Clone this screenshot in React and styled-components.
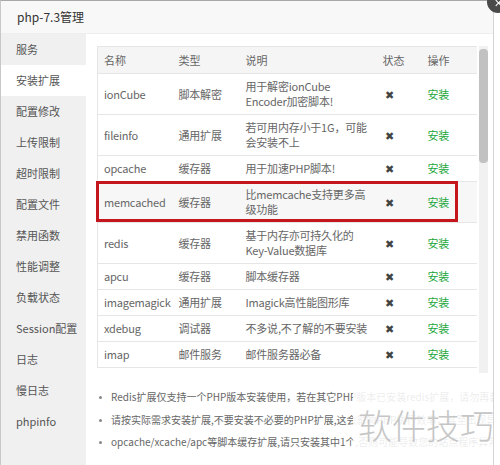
import React from "react";
import styled, { createGlobalStyle } from "styled-components";

const GlobalStyle = createGlobalStyle`
  html, body {
    margin: 0;
    padding: 0;
    background: #fff;
    overflow: hidden;
  }
  body {
    font-family: "Noto Sans CJK SC", "Noto Sans", sans-serif;
    font-size: 11px;
    color: #666;
  }
`;

const Modal = styled.div`
  position: relative;
  width: 492px;
  height: 464px;
  border-top: 1px solid #a8a8a8;
  border-right: 1px solid #d4d4d4;
  border-left: 1px solid #c8c8c8;
  background: #fff;
  display: flex;
  flex-direction: column;
  overflow: hidden;
`;

const TitleBar = styled.div`
  height: 32px;
  line-height: 32px;
  padding-left: 16px;
  background: #f8f8f8;
  border-bottom: 1px solid #eee;
  font-size: 12px;
  color: #333;
`;

const CloseBtn = styled.div`
  position: fixed;
  top: -9px;
  left: 487px;
  width: 22px;
  height: 22px;
  border-radius: 50%;
  background: #4a4a4a;
  color: #fff;
  font-size: 11px;
  display: flex;
  align-items: center;
  justify-content: center;
  z-index: 3;
`;

const Body = styled.div`
  flex: 1;
  display: flex;
  min-height: 0;
`;

const Sidebar = styled.div`
  width: 85px;
  background: #f0f0f0;
  display: flex;
  flex-direction: column;
`;

const NavItem = styled.div`
  height: 31px;
  line-height: 31px;
  padding-left: 15px;
  font-size: 11px;
  color: #555;
  white-space: nowrap;
  background: ${({ active }) => (active ? "#fff" : "transparent")};
`;

const Content = styled.div`
  flex: 1;
  padding: 12px 0 0 11px;
  display: flex;
  flex-direction: column;
  min-width: 0;
`;

const TableWrap = styled.div`
  position: relative;
  display: flex;
  height: 327px;
  flex-shrink: 0;
`;

const TableBox = styled.div`
  width: 380px;
  overflow: hidden;
`;

const Table = styled.table`
  width: 380px;
  border-collapse: collapse;
  table-layout: fixed;
  border: 1px solid #e6e6e6;
`;

const Th = styled.th`
  height: 26px;
  padding: 0 6px;
  background: #f5f5f5;
  font-weight: normal;
  text-align: left;
  color: #666;
  border-bottom: 1px solid #e6e6e6;
`;

const Tr = styled.tr`
  background: ${({ hl }) => (hl ? "#f7f7f7" : "#fff")};
`;

const Td = styled.td`
  padding: 5px 6px;
  line-height: 15px;
  color: #666;
  letter-spacing: -0.2px;
  border-bottom: 1px solid #e6e6e6;
  vertical-align: middle;
  overflow-wrap: anywhere;
  white-space: ${({ nowrap }) => (nowrap ? "nowrap" : "normal")};
`;

const Cross = styled.span`
  color: #444;
  font-size: 11px;
  padding-left: 2px;
`;

const InstallLink = styled.span`
  color: #20a53a;
`;

const Scrollbar = styled.div`
  width: 9px;
  margin-left: 2px;
  background: #f1f1f1;
  display: flex;
  flex-direction: column;
  padding-top: 3px;
`;

const Thumb = styled.div`
  height: 114px;
  background: #c1c1c1;
  border-radius: 4px;
`;

const Highlight = styled.div`
  position: absolute;
  left: -1px;
  top: 135px;
  width: 356px;
  height: 35px;
  border: 3px solid #c4161c;
  pointer-events: none;
`;

const Notes = styled.ul`
  margin: 13px 0 0;
  padding: 0 0 0 14px;
  list-style: none;
`;

const Note = styled.li`
  position: relative;
  height: 22.5px;
  line-height: 22.5px;
  font-size: 10px;
  color: #666;
  white-space: nowrap;
  &::before {
    content: "";
    position: absolute;
    left: -12px;
    top: 10px;
    width: 3px;
    height: 3px;
    border-radius: 50%;
    background: #888;
  }
`;

const Watermark = styled.div`
  position: absolute;
  left: 352px;
  top: 387px;
  width: 148px;
  height: 77px;
  background: rgba(255, 255, 255, 0.88);
  font-family: "Noto Sans CJK SC", sans-serif;
  font-weight: 300;
  font-size: 34px;
  line-height: 40px;
  color: #c6c6c6;
  white-space: nowrap;
  padding: 17px 0 0 5px;
  box-sizing: border-box;
  z-index: 2;
`;

const navItems = [
  "服务",
  "安装扩展",
  "配置修改",
  "上传限制",
  "超时限制",
  "配置文件",
  "禁用函数",
  "性能调整",
  "负载状态",
  "Session配置",
  "日志",
  "慢日志",
  "phpinfo",
];

const rows = [
  ["ionCube", "脚本解密", "用于解密ionCube Encoder加密脚本!"],
  ["fileinfo", "通用扩展", "若可用内存小于1G，可能会安装不上"],
  ["opcache", "缓存器", "用于加速PHP脚本!"],
  ["memcached", "缓存器", "比memcache支持更多高级功能"],
  ["redis", "缓存器", "基于内存亦可持久化的Key-Value数据库"],
  ["apcu", "缓存器", "脚本缓存器"],
  ["imagemagick", "通用扩展", "Imagick高性能图形库"],
  ["xdebug", "调试器", "不多说,不了解的不要安装"],
  ["imap", "邮件服务", "邮件服务器必备"],
];

const notes = [
  "Redis扩展仅支持一个PHP版本安装使用，若在其它PHP版本已安装redis扩展，请勿再装",
  "请按实际需求安装扩展,不要安装不必要的PHP扩展,这会影响PHP执行效率，甚至出现异常",
  "opcache/xcache/apc等脚本缓存扩展,请只安装其中1个,否则可能导致您的站点程序异常",
];

export default function App() {
  return (
    <>
      <GlobalStyle />
      <Modal>
        <TitleBar>php-7.3管理</TitleBar>
        <Body>
          <Sidebar>
            {navItems.map((item) => (
              <NavItem key={item} active={item === "安装扩展"}>
                {item}
              </NavItem>
            ))}
          </Sidebar>
          <Content>
            <TableWrap>
              <TableBox>
                <Table>
                  <colgroup>
                    <col style={{ width: 75 }} />
                    <col style={{ width: 67 }} />
                    <col style={{ width: 137 }} />
                    <col style={{ width: 45 }} />
                    <col style={{ width: 56 }} />
                  </colgroup>
                  <thead>
                    <tr>
                      <Th>名称</Th>
                      <Th>类型</Th>
                      <Th>说明</Th>
                      <Th>状态</Th>
                      <Th>操作</Th>
                    </tr>
                  </thead>
                  <tbody>
                    {rows.map(([name, type, desc]) => (
                      <Tr key={name} hl={name === "memcached"}>
                        <Td nowrap>{name}</Td>
                        <Td nowrap>{type}</Td>
                        <Td>{desc}</Td>
                        <Td>
                          <Cross>✖</Cross>
                        </Td>
                        <Td>
                          <InstallLink>安装</InstallLink>
                        </Td>
                      </Tr>
                    ))}
                  </tbody>
                </Table>
              </TableBox>
              <Scrollbar>
                <Thumb />
              </Scrollbar>
              <Highlight />
            </TableWrap>
            <Notes>
              {notes.map((n) => (
                <Note key={n}>{n}</Note>
              ))}
            </Notes>
          </Content>
        </Body>
        <Watermark>软件技巧</Watermark>
      </Modal>
      <CloseBtn>✕</CloseBtn>
    </>
  );
}
